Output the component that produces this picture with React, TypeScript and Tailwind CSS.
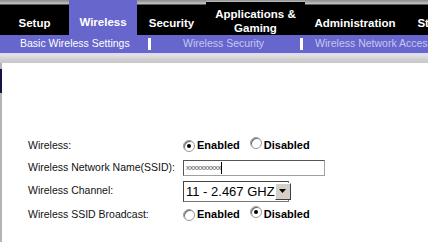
import React from 'react';

const tabs = [
  { label: 'Setup', w: 'w-[69px]' },
  { label: 'Wireless', w: 'w-[68px]', active: true },
  { label: 'Security', w: 'w-[69px]' },
  { label: 'Applications &\nGaming', w: 'w-[99px]' },
  { label: 'Administration', w: 'w-[100px]' },
  { label: 'Status', w: 'w-[60px]' },
];

function Radio({ checked }: { checked?: boolean }) {
  return (
    <span className="relative inline-block w-[12px] h-[12px] rounded-full bg-white border border-[#9a9a9a] shadow-[inset_1px_1px_0_#6b6b6b]">
      {checked && <span className="absolute left-[3px] top-[3px] w-[4px] h-[4px] rounded-full bg-black" />}
    </span>
  );
}

function RadioPair({ enabled }: { enabled: boolean }) {
  return (
    <div className="flex items-center font-bold text-[11px] text-black">
      <Radio checked={enabled} />
      <span className="ml-[2px]">Enabled</span>
      <span className="ml-[10px]"><Radio checked={!enabled} /></span>
      <span className="ml-[2px]">Disabled</span>
    </div>
  );
}

export default function App() {
  return (
    <div className="w-[428px] h-[242px] overflow-hidden bg-white font-['Liberation_Sans',Arial,sans-serif]">
      {/* main tabs */}
      <div className="flex h-[35px] whitespace-nowrap">
        {tabs.map((t) =>
          t.active ? (
            <div key={t.label} className={`${t.w} shrink-0 bg-[#6666cc] flex items-center justify-center pt-[11px] text-white font-bold text-[11.5px]`}>
              {t.label}
            </div>
          ) : (
            <div key={t.label} className={`${t.w} shrink-0 flex flex-col`}>
              <div className="h-[4px] bg-gradient-to-b from-[#8c8c8c] to-[#c4c4c4]" />
              <div className="h-[1px] bg-[#5a5a6a]" />
              <div className="flex-1 bg-black flex items-center justify-center text-center text-white font-bold text-[11.5px] leading-[14px] whitespace-pre pt-[5px]">
                {t.label}
              </div>
            </div>
          )
        )}
      </div>
      {/* sub nav */}
      <div className="h-[18px] bg-[#6666cc] flex items-center text-[10.5px] whitespace-nowrap">
        <span className="w-[148px] shrink-0 pl-[20px] text-white">Basic Wireless Settings</span>
        <span className="w-[3px] h-[12px] shrink-0 bg-white" />
        <span className="w-[149px] shrink-0 pl-[32px] text-[#c6c6f4]">Wireless Security</span>
        <span className="w-[3px] h-[12px] shrink-0 bg-white" />
        <span className="pl-[12px] text-[#c6c6f4]">Wireless Network Access</span>
      </div>
      <div className="h-[2px] bg-[#dcdcf4]" />
      <div className="h-[8px] bg-gradient-to-b from-[#e2e2e2] via-[#d0d0d0] to-[#c8c8c8]" />
      {/* content */}
      <div className="flex h-[179px]">
        <div className="w-[2px] shrink-0 bg-[#b4b4b4] flex flex-col">
          <div className="h-[6px]" />
          <div className="h-[24px] bg-[#14144a]" />
        </div>
        <div className="flex-1 bg-white pt-[71px] pl-[26px] text-[10.5px] text-[#111]">
          <div className="flex items-center h-[23px]">
            <span className="w-[155px]">Wireless:</span>
            <RadioPair enabled />
          </div>
          <div className="flex items-center h-[22px]">
            <span className="w-[155px]">Wireless Network Name(SSID):</span>
            <div className="w-[142px] h-[16px] bg-white border border-[#a0a0a0] border-t-[#555] border-l-[#555] flex items-center pl-[2px] text-[8px] text-[#555] tracking-[-0.5px]">
              xxxxxxxxxx<span className="w-[1px] h-[12px] bg-black" />
            </div>
          </div>
          <div className="flex items-center h-[24px]">
            <span className="w-[155px]">Wireless Channel:</span>
            <div className="h-[21px] w-[106px] flex items-center border border-[#777] border-t-[#444] border-l-[#444] bg-white whitespace-nowrap">
              <span className="flex-1 pl-[2px] text-[13px] text-black leading-none">11 - 2.467 GHZ</span>
              <span className="w-[16px] h-[17px] mr-[1px] shrink-0 bg-[#d4d0c8] border border-[#fff] border-r-[#404040] border-b-[#404040] flex items-center justify-center">
                <svg width="7" height="4" viewBox="0 0 7 4"><path d="M0 0h7L3.5 4z" fill="#000" /></svg>
              </span>
            </div>
          </div>
          <div className="flex items-center h-[23px]">
            <span className="w-[155px]">Wireless SSID Broadcast:</span>
            <RadioPair enabled={false} />
          </div>
        </div>
      </div>
    </div>
  );
}
